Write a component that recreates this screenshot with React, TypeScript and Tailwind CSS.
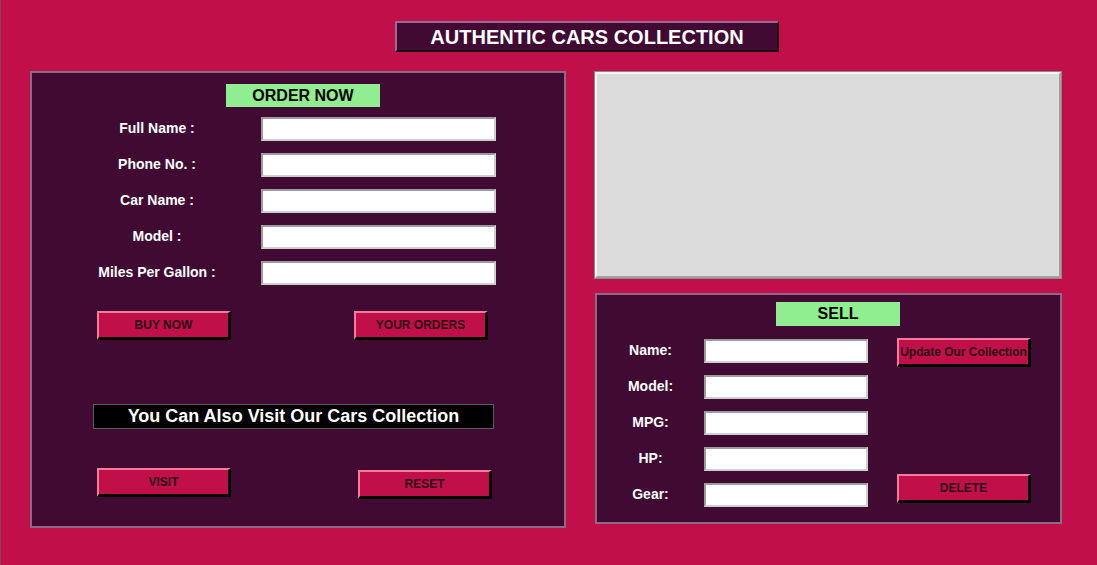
import React from 'react';

const font = { fontFamily: '"Liberation Sans", Arial, sans-serif' };

const orderFields = ['Full Name :', 'Phone No. :', 'Car Name :', 'Model :', 'Miles Per Gallon :'];
const sellFields = ['Name:', 'Model:', 'MPG:', 'HP:', 'Gear:'];

const Btn = ({ label, className = '' }: { label: string; className?: string }) => (
  <button
    className={`w-[134px] h-[29px] bg-[#C10F4A] border-t-2 border-l-2 border-r-[3px] border-b-[3px] border-t-[#F57A9C] border-l-[#F57A9C] border-r-black border-b-black text-[12px] font-bold text-[#2a0614] leading-none whitespace-nowrap ${className}`}
  >
    {label}
  </button>
);

const Field = ({ w }: { w: string }) => (
  <input
    className={`${w} h-[24px] bg-white border-2 border-t-[#9c9c9c] border-l-[#9c9c9c] border-r-[#cfcfcf] border-b-[#cfcfcf] outline-none`}
  />
);

const App = () => {
  return (
    <div style={font} className="w-[1097px] h-[565px] bg-[#C10F4A] border-l border-[#8a4060] overflow-hidden">
      {/* Title */}
      <div className="pt-[21px] pl-[394px]">
        <div className="w-[384px] h-[31px] bg-[#400A33] border-2 border-t-[#9a6a90] border-l-[#9a6a90] border-r-[#1a0010] border-b-[#1a0010] flex items-center justify-center text-white font-bold text-[20px]">
          AUTHENTIC CARS COLLECTION
        </div>
      </div>

      <div className="flex mt-[19px] pl-[29px]">
        {/* Order panel */}
        <div className="w-[536px] h-[457px] bg-[#400A33] border-2 border-[#8c6a84] flex flex-col">
          <div className="mt-[11px] ml-[194px] w-[154px] h-[23px] bg-[#90EE90] flex items-center justify-center text-[16px] font-bold text-black">
            ORDER NOW
          </div>
          <div className="mt-[10px] flex flex-col gap-[12px]">
            {orderFields.map((f) => (
              <div key={f} className="flex items-center">
                <div className="ml-[25px] w-[200px] text-center text-white font-bold text-[14px] -mt-[2px]">{f}</div>
                <div className="ml-[4px]">
                  <Field w="w-[235px]" />
                </div>
              </div>
            ))}
          </div>
          <div className="mt-[26px] flex pl-[65px]">
            <Btn label="BUY NOW" />
            <Btn label="YOUR ORDERS" className="ml-[123px]" />
          </div>
          <div className="mt-[64px] ml-[61px] w-[401px] h-[25px] bg-black border border-[#5a5a5a] flex items-center justify-center text-white font-bold text-[18px]">
            You Can Also Visit Our Cars Collection
          </div>
          <div className="mt-[39px] flex items-start pl-[65px]">
            <Btn label="VISIT" />
            <Btn label="RESET" className="ml-[127px] mt-[2px]" />
          </div>
        </div>

        {/* Right column */}
        <div className="ml-[29px] flex flex-col">
          <div className="mt-[1px] w-[466px] h-[206px] bg-[#DCDCDC] border-2 border-t-[#f6f6f6] border-l-[#f6f6f6] border-r-[#a0a0a0] border-b-[#a0a0a0] outline outline-[#8a8a8a]" />
          <div className="mt-[15px] w-[467px] h-[231px] bg-[#400A33] border-2 border-[#8c6a84] flex flex-col">
            <div className="mt-[7px] ml-[179px] w-[124px] h-[24px] bg-[#90EE90] flex items-center justify-center text-[16px] font-bold text-black">
              SELL
            </div>
            <div className="flex mt-[13px]">
              <div className="flex flex-col gap-[12px]">
                {sellFields.map((f) => (
                  <div key={f} className="flex items-center">
                    <div className="w-[107px] text-center text-white font-bold text-[14px] -mt-[2px]">{f}</div>
                    <Field w="w-[164px]" />
                  </div>
                ))}
              </div>
              <div className="ml-[29px] flex flex-col justify-between pb-[4px]">
                <Btn label="Update Our Collection" className="-mt-[1px]" />
                <Btn label="DELETE" />
              </div>
            </div>
          </div>
        </div>
      </div>
    </div>
  );
};

export default App;
